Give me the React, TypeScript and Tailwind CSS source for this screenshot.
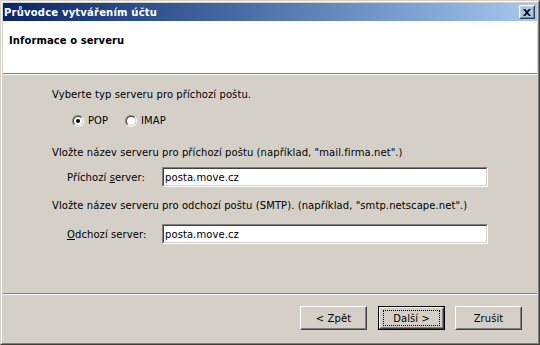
import React from "react";

function Raised({ children, className = "" }: { children?: React.ReactNode; className?: string }) {
    return (
        <div className={"border border-t-white border-l-white border-r-[#404040] border-b-[#404040] " + className}>
            <div className="w-full h-full border border-t-[#d4d0c8] border-l-[#d4d0c8] border-r-[#808080] border-b-[#808080] flex items-center justify-center">
                {children}
            </div>
        </div>
    );
}

function Button({ label, isDefault }: { label: string; isDefault?: boolean }) {
    if (isDefault) {
        return (
            <div className="w-[67px] h-[24px] border border-black">
                <Raised className="w-full h-full">
                    <div className="w-[57px] h-[16px] border border-dotted border-black flex items-center justify-center">
                        {label}
                    </div>
                </Raised>
            </div>
        );
    }
    return <Raised className="w-[67px] h-[24px]">{label}</Raised>;
}

function Radio({ label, checked }: { label: string; checked?: boolean }) {
    return (
        <div className="flex items-center w-[53px]">
            <div className="w-[12px] h-[12px] rounded-full border border-t-[#808080] border-l-[#808080] border-r-white border-b-white">
                <div className="w-full h-full rounded-full border border-t-[#404040] border-l-[#404040] border-r-[#d4d0c8] border-b-[#d4d0c8] bg-white flex items-center justify-center">
                    {checked && <div className="w-[4px] h-[4px] rounded-full bg-black" />}
                </div>
            </div>
            <span className="ml-[4px]">{label}</span>
        </div>
    );
}

function Field({ label, value }: { label: React.ReactNode; value: string }) {
    return (
        <div className="flex items-center h-[20px] pl-[15px]">
            <div className="w-[95px]">{label}</div>
            <div className="w-[326px] h-[20px] border border-t-[#808080] border-l-[#808080] border-r-white border-b-white">
                <div className="w-full h-full border border-t-[#404040] border-l-[#404040] border-r-[#d4d0c8] border-b-[#d4d0c8] bg-white flex items-center pl-[1px]">
                    {value}
                </div>
            </div>
        </div>
    );
}

export default function App() {
    return (
        <div className="w-[540px] h-[345px] font-['DejaVu_Sans',sans-serif] text-[10px] leading-[13px] tracking-[0.08px] text-black select-none">
            <div className="w-full h-full border border-t-[#d4d0c8] border-l-[#d4d0c8] border-r-[#404040] border-b-[#404040]">
                <div className="w-full h-full border border-t-white border-l-white border-r-[#808080] border-b-[#808080] bg-[#d4d0c8] p-[1px] flex flex-col">
                    {/* title bar */}
                    <div className="h-[18px] flex items-center justify-between bg-gradient-to-r from-[#0a246a] to-[#a6caf0] pl-[1px] pr-[2px]">
                        <span className="text-white font-bold tracking-[0.2px]">Průvodce vytvářením účtu</span>
                        <Raised className="w-[16px] h-[14px]">
                            <svg width="8" height="7" viewBox="0 0 8 7">
                                <path d="M0 0h2l2 2 2-2h2L5 3.5 8 7H6L4 5 2 7H0l3-3.5z" fill="black" />
                            </svg>
                        </Raised>
                    </div>
                    {/* header */}
                    <div className="h-[52px] bg-white pl-[6px] pt-[13px] font-bold">Informace o serveru</div>
                    <div className="h-[1px] bg-[#808080]" />
                    <div className="h-[1px] bg-white" />
                    {/* body */}
                    <div className="h-[218px] pl-[49px] pt-[13px]">
                        <div>Vyberte typ serveru pro příchozí poštu.</div>
                        <div className="flex items-center h-[13px] mt-[13px] pl-[20px]">
                            <Radio label="POP" checked />
                            <Radio label="IMAP" />
                        </div>
                        <div className="mt-[19px]">Vložte název serveru pro příchozí poštu (například, "mail.firma.net".)</div>
                        <div className="mt-[8px]">
                            <Field label={<>Příchozí <u>s</u>erver:</>} value="posta.move.cz" />
                        </div>
                        <div className="mt-[12px]">Vložte název serveru pro odchozí poštu (SMTP). (například, "smtp.netscape.net".)</div>
                        <div className="mt-[12px]">
                            <Field label={<><u>O</u>dchozí server:</>} value="posta.move.cz" />
                        </div>
                    </div>
                    <div className="h-[1px] bg-[#808080]" />
                    <div className="h-[1px] bg-white" />
                    <div className="flex pt-[11px] pl-[297px] gap-[11px]">
                        <Button label="< Zpět" />
                        <Button label="Další >" isDefault />
                        <div className="-ml-[1px]">
                            <Button label="Zrušit" />
                        </div>
                    </div>
                </div>
            </div>
        </div>
    );
}
